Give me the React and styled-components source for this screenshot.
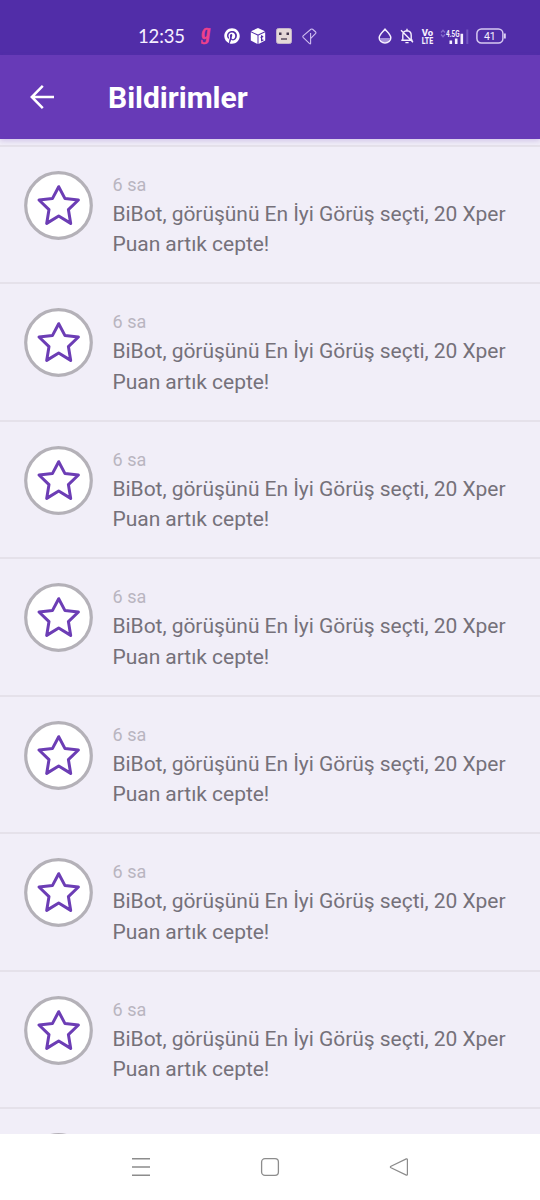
import styled, { createGlobalStyle } from "styled-components";
import { FaPinterest } from "react-icons/fa";

const GlobalStyle = createGlobalStyle`
  * {
    box-sizing: border-box;
  }

  body {
    margin: 0;
    font-family: Roboto, sans-serif;
    background-color: #f1eef8;
  }
`;

const Screen = styled.div`
  width: 540px;
  height: 1200px;
  display: flex;
  flex-direction: column;
  overflow: hidden;
  background-color: #f1eef8;
`;

const StatusBar = styled.div`
  flex: none;
  height: 55px;
  padding: 17px 34px 0 138px;
  display: flex;
  justify-content: space-between;
  align-items: flex-start;
  background-color: #512da8;
  color: #f6f0ff;

  svg {
    display: block;
    flex: none;
    overflow: visible;
  }
`;

const StatusGroup = styled.div`
  height: 38px;
  display: flex;
  align-items: center;
  gap: ${(props) => props.$gap}px;
`;

const Clock = styled.div`
  width: 50px;
  font-family: Lato, sans-serif;
  font-size: 18.5px;
  letter-spacing: -0.15px;
  white-space: nowrap;
`;

const Header = styled.div`
  flex: none;
  position: relative;
  height: 84px;
  padding: 0 28px;
  display: flex;
  align-items: center;
  gap: 52px;
  background-color: #673ab7;
  color: white;
  box-shadow: 0 2px 5px rgba(103, 58, 183, 0.22);
`;

const Title = styled.div`
  padding-top: 1px;
  font-size: 30px;
  font-weight: 700;
  letter-spacing: -0.02px;
`;

const List = styled.div`
  flex: 1;
  min-height: 0;
  padding-top: 5.5px;
  overflow: hidden;
`;

const Row = styled.div`
  height: 137.5px;
  padding: 24.2px 0 0 24px;
  display: flex;
  align-items: flex-start;
  gap: 19.5px;
  border-top: 2px solid #e5e1ea;

  svg {
    flex: none;
  }
`;

const RowText = styled.div`
  padding-top: 3px;
`;

const Time = styled.div`
  height: 25px;
  font-size: 18px;
  line-height: 22px;
  letter-spacing: 0.05px;
  color: #b9b5c0;
`;

const Message = styled.div`
  width: 410px;
  font-size: 21px;
  line-height: 30.6px;
  letter-spacing: -0.04px;
  color: #75717a;
`;

const NavBar = styled.div`
  flex: none;
  height: 66px;
  padding: 0 131px;
  display: flex;
  justify-content: space-between;
  align-items: center;
  background-color: white;
`;

const Avatar = () => (
  <svg width="69" height="69" viewBox="0 0 69 69">
    <circle cx="34.5" cy="34.5" r="32.8" fill="#fff" stroke="#b4b1b8" strokeWidth="3.2" />
    <path
      d="M34.7 15.7 41 27.6 54.4 29 44.4 38.6 46.7 52.4 34.7 45 22.7 52.4 25 38.6 15 29 28.4 27.6Z"
      fill="none"
      stroke="#6c3db5"
      strokeWidth="3"
      strokeLinejoin="round"
    />
  </svg>
);

const BackArrow = () => (
  <svg width="28" height="28" viewBox="0 0 28 28" fill="none" stroke="#fff" strokeWidth="2.5">
    <path d="M26 14H4M14.8 2.9 3.8 14 14.8 25.1" />
  </svg>
);

const LetterBadge = () => (
  <svg width="16" height="26" viewBox="0 0 16 26">
    <text
      x="3.5"
      y="15.8"
      fontFamily="Liberation Serif, serif"
      fontSize="22.5"
      fontStyle="italic"
      fontWeight="700"
      fill="#f0418a"
      stroke="#f0418a"
      strokeWidth=".6"
      textLength="9"
      lengthAdjust="spacingAndGlyphs"
    >
      g
    </text>
  </svg>
);

const Cube = () => (
  <svg width="16" height="18" viewBox="0 0 16 18">
    <path d="M8 1 15 4.2 8 7.6 1 4.2Z" fill="#fff" />
    <path d="M.8 5.2 7.5 8.4V17L.8 13.5Z" fill="#fff" />
    <path d="M8.5 8.4 15.2 5.2V13.5L8.5 17Z" fill="#fff" />
    <path d="M11.6 8.3V13.7L13.4 12.9M10.6 10.6 13.2 9.4" fill="none" stroke="#512da8" strokeWidth="1.2" />
  </svg>
);

const Robot = () => (
  <svg width="16" height="16" viewBox="0 0 16 16">
    <rect x=".5" y=".5" width="15" height="15" rx="2" fill="#e4d9d7" stroke="#c3b3cb" />
    <rect x="3" y="4.5" width="2.5" height="2.5" fill="#43384d" />
    <rect x="10.5" y="4.5" width="2.5" height="2.5" fill="#43384d" />
    <path d="M5 11H11" stroke="#43384d" strokeWidth="1.3" />
  </svg>
);

const Diamond = () => (
  <svg width="15" height="17" viewBox="0 0 15 17" fill="none" stroke="#cfbdf0" strokeWidth="1.1">
    <path d="M8.6 5V15.6Q8.4 16.3 7.6 15.6L1.1 9.3Q.5 8.6 1.1 7.9L8.9 1.3Q9.8.7 10.6 1.3L13.7 4Q14.3 4.7 13.7 5.4L8.8 10.4" />
  </svg>
);

const Drop = () => (
  <svg width="14" height="16" viewBox="0 0 14 16">
    <path d="M2 10H12Q11 14.3 7 14.3 3 14.3 2 10Z" fill="#a58fda" />
    <path
      d="M7 1.2C5.4 3.4 1.2 6.7 1.2 9.7A5.8 5.2 0 0 0 12.8 9.7C12.8 6.7 8.6 3.4 7 1.2Z"
      fill="none"
      stroke="#f6f0ff"
      strokeWidth="1.5"
    />
  </svg>
);

const MutedBell = () => (
  <svg width="14" height="16" viewBox="0 0 14 16" fill="none" stroke="#f6f0ff" strokeWidth="1.4">
    <path d="M1.3 12.2H12.7M2.8 12V7.2Q2.8 3 7 2.8 11.2 3 11.2 7.2V12M7 2.8V.8M5.4 14.6H8.6M1 2.2 13 14.2" />
  </svg>
);

const VoLteStack = styled.div`
  width: 12px;
  display: flex;
  flex-direction: column;
  gap: 1px;
`;

const VoLteLine = ({ children }) => (
  <svg width="12" height="7" viewBox="0 0 12 7">
    <text
      x=".8"
      y="7"
      fontFamily="Roboto, sans-serif"
      fontSize="9.6"
      fontWeight="800"
      fill="#f6f0ff"
      textLength="11.4"
      lengthAdjust="spacingAndGlyphs"
    >
      {children}
    </text>
  </svg>
);

const VoLte = () => (
  <VoLteStack>
    <VoLteLine>Vo</VoLteLine>
    <VoLteLine>LTE</VoLteLine>
  </VoLteStack>
);

const Signal = () => (
  <svg width="28" height="17" viewBox="0 0 28 17">
    <path d="M0 4.5 2 2.3 4 4.5M0 6.5 2 8.7 4 6.5" fill="none" stroke="#8369cb" strokeWidth="1.3" />
    <text
      x="5"
      y="8.6"
      fontFamily="Roboto, sans-serif"
      fontSize="9.8"
      fontWeight="700"
      fill="#f6f0ff"
      textLength="13.5"
      lengthAdjust="spacingAndGlyphs"
    >
      4.5G
    </text>
    <path d="M9.8 16V12.4M15.2 16V10.6M20.8 16V5.8" stroke="#f6f0ff" strokeWidth="2.6" />
    <path d="M26.3 16V1.5" stroke="#7255c0" strokeWidth="2" />
  </svg>
);

const Battery = () => (
  <svg width="30" height="16" viewBox="0 0 30 16">
    <rect x=".9" y=".9" width="26" height="14.2" rx="4.5" fill="none" stroke="#d6c9f1" strokeWidth="1.5" />
    <path d="M28.9 5.5V10.5" stroke="#e4daf7" strokeWidth="1.7" />
    <text x="13.8" y="11.8" fontFamily="Roboto, sans-serif" fontSize="10.5" fill="#f6f0ff" textAnchor="middle">
      41
    </text>
  </svg>
);

const MenuIcon = () => (
  <svg width="20" height="20" viewBox="0 0 20 20" stroke="#8c8c8c" strokeWidth="1.6">
    <path d="M1 1.8H19M1 10H19M1 18.2H19" />
  </svg>
);

const HomeIcon = () => (
  <svg width="20" height="20" viewBox="0 0 20 20" fill="none" stroke="#8c8c8c" strokeWidth="1.3">
    <rect x="1.6" y="1.6" width="16.8" height="16.8" rx="3.4" />
  </svg>
);

const BackIcon = () => (
  <svg width="20" height="20" viewBox="0 0 20 20" fill="none" stroke="#8c8c8c" strokeWidth="1.2">
    <path d="M17.3 1.9 2 9.2Q.7 10 2 10.8L17.3 18.1Q18.4 18.4 18.4 17.2V2.8Q18.4 1.6 17.3 1.9Z" />
  </svg>
);

const notifications = Array.from({ length: 8 }, (_, id) => ({
  id,
  time: "6 sa",
  message: "BiBot, görüşünü En İyi Görüş seçti, 20 Xper Puan artık cepte!",
}));

const App = () => {
  return (
    <Screen>
      <GlobalStyle />
      <StatusBar>
        <StatusGroup $gap={10}>
          <Clock>12:35</Clock>
          <LetterBadge />
          <FaPinterest size={16} color="#fff" />
          <Cube />
          <Robot />
          <Diamond />
        </StatusGroup>
        <StatusGroup $gap={7.5}>
          <Drop />
          <MutedBell />
          <VoLte />
          <Signal />
          <Battery />
        </StatusGroup>
      </StatusBar>

      <Header>
        <BackArrow />
        <Title>Bildirimler</Title>
      </Header>

      <List>
        {notifications.map(({ id, time, message }) => (
          <Row key={id}>
            <Avatar />
            <RowText>
              <Time>{time}</Time>
              <Message>{message}</Message>
            </RowText>
          </Row>
        ))}
      </List>

      <NavBar>
        <MenuIcon />
        <HomeIcon />
        <BackIcon />
      </NavBar>
    </Screen>
  );
};

export default App;
